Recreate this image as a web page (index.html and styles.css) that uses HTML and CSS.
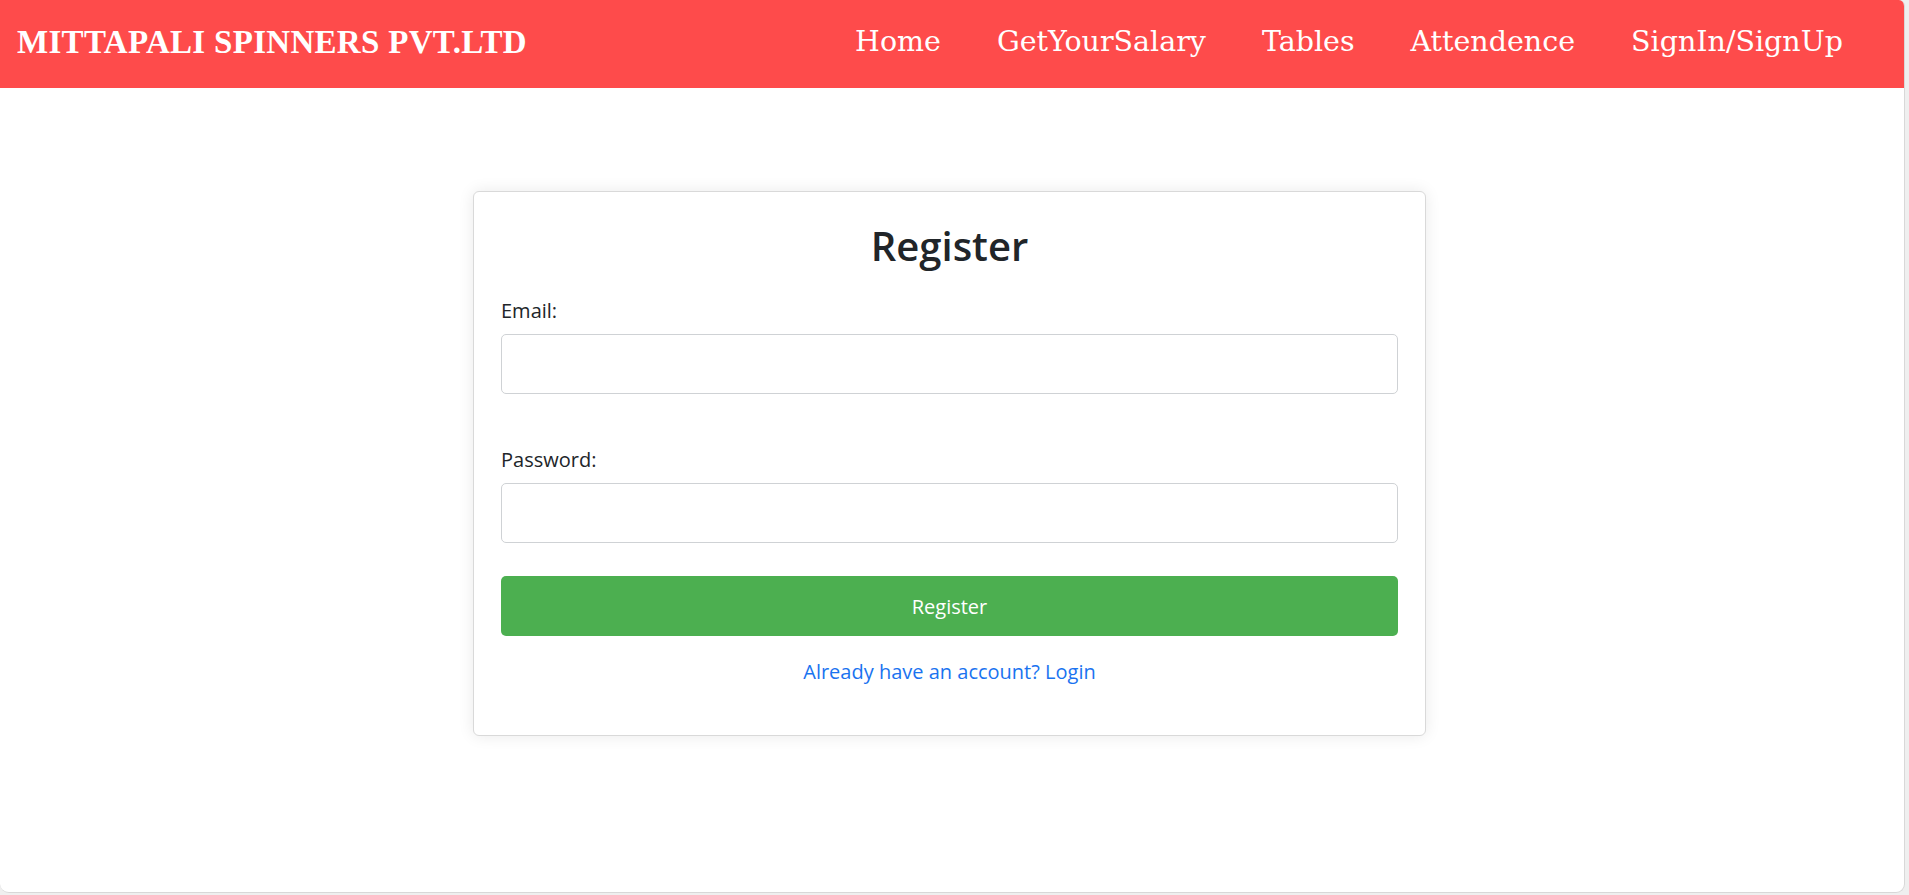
FILE: index.html
```html
<!DOCTYPE html>
<html lang="en">
<head>
<meta charset="utf-8">
<title>Register - Mittapali Spinners</title>
<link rel="stylesheet" href="styles.css">
</head>
<body>
<div class="window">
  <header class="navbar">
    <div class="brand">MITTAPALI SPINNERS PVT.LTD</div>
    <nav class="nav">
      <a class="nav-link" href="#">Home</a>
      <a class="nav-link" href="#">GetYourSalary</a>
      <a class="nav-link" href="#">Tables</a>
      <a class="nav-link" href="#">Attendence</a>
      <a class="nav-link" href="#">SignIn/SignUp</a>
    </nav>
  </header>
  <main class="main">
    <form class="card">
      <h2 class="card-title">Register</h2>
      <div class="field">
        <label class="label" for="email">Email:</label>
        <input class="input" id="email" type="email">
      </div>
      <div class="field field-second">
        <label class="label" for="password">Password:</label>
        <input class="input" id="password" type="password">
      </div>
      <button class="btn" type="button">Register</button>
      <p class="switch"><a href="#">Already have an account? Login</a></p>
    </form>
  </main>
</div>
</body>
</html>
```
FILE: styles.css
```css
* { box-sizing: border-box; }
html, body { margin: 0; padding: 0; }
body {
  background: #efefef;
  font-family: "Open Sans", "Noto Sans", sans-serif;
  color: #212529;
  width: 1909px;
  height: 895px;
  overflow: hidden;
}
.window {
  width: 1905px;
  height: 893px;
  background: #ffffff;
  border-right: 1px solid #d8d8d8;
  border-bottom: 1px solid #d8d8d8;
  border-radius: 0 6px 9px 9px;
  overflow: hidden;
}
.navbar {
  height: 88px;
  background: #fe4b4b;
  display: flex;
  align-items: center;
  justify-content: space-between;
  padding: 0 61px 0 17px;
}
.brand {
  font-family: "Liberation Serif", "Times New Roman", serif;
  font-weight: 700;
  font-size: 33px;
  letter-spacing: 0.3px;
  color: #ffffff;
  margin-top: -4px;
}
.nav {
  display: flex;
  gap: 56px;
  margin-top: -5px;
}
.nav-link {
  font-family: "DejaVu Serif", Georgia, serif;
  font-size: 28.5px;
  color: #ffffff;
  text-decoration: none;
}
.main {
  padding-top: 103px;
}
.card {
  width: 953px;
  margin: 0 auto 0 473px;
  border: 1px solid #d9d9d9;
  border-radius: 6px;
  background: #fff;
  box-shadow: 0 0 16px rgba(0, 0, 0, 0.09);
  padding: 30px 27px 48px;
}
.card-title {
  margin: 0 0 26px;
  text-align: center;
  font-size: 40px;
  font-weight: 600;
  line-height: 48px;
}
.field { display: flex; flex-direction: column; }
.field-second { margin-top: 51px; }
.label {
  font-size: 20px;
  line-height: 30px;
  margin-bottom: 8px;
  color: #212529;
}
.input {
  height: 60px;
  width: 100%;
  border: 1px solid #cfd2d5;
  border-radius: 5px;
  font-size: 20px;
  padding: 0 15px;
  font-family: inherit;
  background: #fff;
}
.btn {
  display: block;
  width: 100%;
  height: 60px;
  margin-top: 33px;
  border: none;
  border-radius: 5px;
  background: #4caf50;
  color: #ffffff;
  font-family: inherit;
  font-size: 20px;
}
.switch {
  margin: 21px 0 0;
  text-align: center;
  font-size: 20px;
  line-height: 30px;
}
.switch a {
  color: #1a73f0;
  text-decoration: none;
}
```
